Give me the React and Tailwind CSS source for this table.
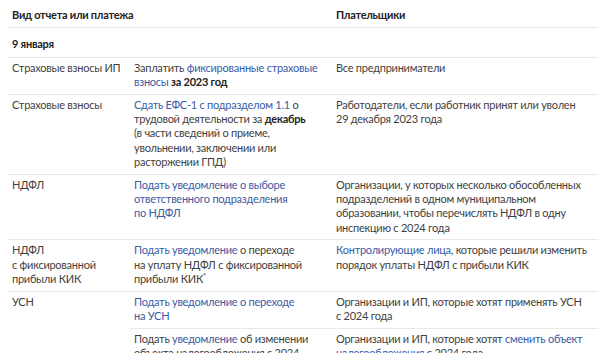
import React from 'react';

const L = ({ children }) => <span className="text-[#3a5ca6]">{children}</span>;

const rows = [
  {
    kind: 'Страховые взносы ИП',
    what: (
      <>
        Заплатить <L>фиксированные страховые</L>
        <br />
        <L>взносы</L> <b className="font-bold text-[#222]">за 2023 год</b>
      </>
    ),
    who: <>Все предприниматели</>,
  },
  {
    kind: 'Страховые взносы',
    what: (
      <>
        <L>Сдать ЕФС-1 с подразделом 1.1</L> о
        <br />
        трудовой деятельности за <b className="font-bold text-[#222]">декабрь</b>
        <br />
        (в части сведений о приеме,
        <br />
        увольнении, заключении или
        <br />
        расторжении ГПД)
      </>
    ),
    who: (
      <>
        Работодатели, если работник принят или уволен
        <br />
        29 декабря 2023 года
      </>
    ),
  },
  {
    kind: 'НДФЛ',
    what: (
      <L>
        Подать уведомление о выборе
        <br />
        ответственного подразделения
        <br />
        по НДФЛ
      </L>
    ),
    who: (
      <>
        Организации, у которых несколько обособленных
        <br />
        подразделений в одном муниципальном
        <br />
        образовании, чтобы перечислять НДФЛ в одну
        <br />
        инспекцию с 2024 года
      </>
    ),
  },
  {
    kind: (
      <>
        НДФЛ
        <br />с фиксированной
        <br />
        прибыли КИК
      </>
    ),
    what: (
      <>
        <L>Подать уведомление</L> о переходе
        <br />
        на уплату НДФЛ с фиксированной
        <br />
        прибыли КИК<sup className="text-[7px]">*</sup>
      </>
    ),
    who: (
      <>
        <L>Контролирующие лица</L>, которые решили изменить
        <br />
        порядок уплаты НДФЛ с прибыли КИК
      </>
    ),
  },
];

const td = 'align-top whitespace-nowrap overflow-hidden pl-1 pr-1 pt-[3px] pb-[4.5px] border-b border-[#e8e8e8]';
const th = 'text-left font-bold text-[#222] pl-1 pt-2 pb-[5px] border-b border-[#e8e8e8]';

export default function App() {
  return (
    <div
      className="w-[598px] h-[353px] overflow-hidden bg-white pl-2 text-[11px] leading-[14.3px] tracking-[-0.25px] text-[#3f3f3f]"
      style={{ fontFamily: 'Lato, Roboto, sans-serif' }}
    >
      <table className="w-[600px] border-collapse table-fixed">
        <colgroup>
          <col className="w-[122px]" />
          <col className="w-[202px]" />
          <col />
        </colgroup>
        <thead>
          <tr>
            <th className={th} colSpan={2}>
              Вид отчета или платежа
            </th>
            <th className={th}>Плательщики</th>
          </tr>
        </thead>
        <tbody>
          <tr>
            <td colSpan={3} className="pl-1 pt-[9px] pb-[5px] font-bold text-[#222] border-b border-[#e8e8e8]">
              9 января
            </td>
          </tr>
          {rows.map((r, i) => (
            <tr key={i}>
              <td className={td}>{r.kind}</td>
              <td className={td}>{r.what}</td>
              <td className={td}>{r.who}</td>
            </tr>
          ))}
          <tr>
            <td rowSpan={2} className={td}>
              УСН
            </td>
            <td className={td}>
              <L>
                Подать уведомление о переходе
                <br />
                на УСН
              </L>
            </td>
            <td className={td}>
              Организации и ИП, которые хотят применять УСН
              <br />с 2024 года
            </td>
          </tr>
          <tr>
            <td className={td}>
              Подать <L>уведомление</L> об изменении
              <br />
              объекта налогообложения с 2024
            </td>
            <td className={td}>
              Организации и ИП, которые хотят <L>сменить объект</L>
              <br />
              <L>налогообложения</L> с 2024 года
            </td>
          </tr>
        </tbody>
      </table>
    </div>
  );
}
